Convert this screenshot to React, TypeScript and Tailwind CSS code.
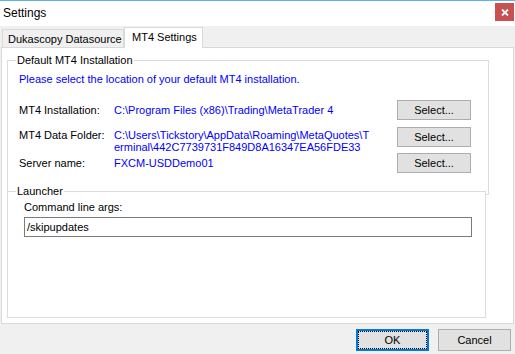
import React from "react";

const F = { fontFamily: '"Liberation Sans", Arial, sans-serif' };

function SelectBtn() {
  return (
    <button className="w-[74px] h-[20px] bg-[#e1e1e1] border border-[#adadad] text-[11px] leading-[13px] text-black flex items-center justify-center">
      Select...
    </button>
  );
}

export default function App() {
  return (
    <div
      className="w-[515px] h-[354px] bg-[#f0f0f0] flex flex-col overflow-hidden text-black"
      style={F}
    >
      {/* Title bar */}
      <div className="h-[26px] bg-white border-t border-[#5cb3ec] flex items-start justify-between">
        <div className="pl-[3px] pt-[4px] text-[12px] leading-[16px]">Settings</div>
        <div className="mt-[2px] mr-[1px] w-[19px] h-[18px] bg-[#c75050] flex items-center justify-center">
          <svg width="8" height="7" viewBox="0 0 8 7">
            <path d="M1 0.5 L7 6.5 M7 0.5 L1 6.5" stroke="white" strokeWidth="1.8" />
          </svg>
        </div>
      </div>

      {/* Tabs strip */}
      <div className="h-[21px] flex items-end pl-[2px]">
        <div className="w-[122px] h-[18px] border border-b-0 border-[#d9d9d9] bg-[#f0f0f0] text-[11px] leading-[13px] pl-[5px] pt-[3px]">
          Dukascopy Datasource
        </div>
        <div className="relative z-10 -mb-px w-[79px] h-[21px] border border-b-0 border-[#d9d9d9] bg-white text-[11px] leading-[13px] pl-[7px] pt-[3px]">
          MT4 Settings
        </div>
      </div>

      {/* Panel */}
      <div className="ml-[1px] w-[513px] h-[277px] border border-[#d9d9d9] bg-white flex flex-col text-[11px] leading-[13px]">
        {/* Group 1 */}
        <div className="relative ml-[5px] mt-[12px] w-[482px] h-[135px] border border-[#dcdcdc] flex flex-col">
          <span className="absolute left-[8px] top-[-7px] bg-white px-[1px]">Default MT4 Installation</span>
          <div className="ml-[11px] mt-[12px] text-[#0000ff]">
            Please select the location of your default MT4 installation.
          </div>
          <div className="mt-[14px] h-[20px] flex items-start">
            <div className="ml-[11px] w-[95px] mt-[4px]">MT4 Installation:</div>
            <div className="w-[283px] mt-[4px] text-[#0000ff] whitespace-nowrap">
              C:\Program Files (x86)\Trading\MetaTrader 4
            </div>
            <SelectBtn />
          </div>
          <div className="mt-[7px] h-[20px] flex items-start">
            <div className="ml-[11px] w-[95px] mt-[2px]">MT4 Data Folder:</div>
            <div className="w-[283px] mt-[2px] text-[#0000ff] whitespace-nowrap leading-[12px]">
              C:\Users\Tickstory\AppData\Roaming\MetaQuotes\T
              <br />
              erminal\442C7739731F849D8A16347EA56FDE33
            </div>
            <SelectBtn />
          </div>
          <div className="mt-[6px] h-[20px] flex items-start">
            <div className="ml-[11px] w-[95px] mt-[4px]">Server name:</div>
            <div className="w-[283px] mt-[4px] text-[#0000ff] whitespace-nowrap">FXCM-USDDemo01</div>
            <SelectBtn />
          </div>
        </div>

        {/* Launcher group */}
        <div className="relative ml-[5px] -mt-[4px] w-[479px] h-[127px] border border-[#dcdcdc] bg-white flex flex-col">
          <span className="absolute left-[8px] top-[-7px] bg-white px-[1px]">Launcher</span>
          <div className="ml-[16px] mt-[9px]">Command line args:</div>
          <div className="ml-[16px] mt-[3px] w-[448px] h-[20px] border border-[#7a7a7a] bg-white pl-[2px] flex items-center">
            /skipupdates
          </div>
        </div>
      </div>

      {/* Bottom buttons */}
      <div className="mt-[5px] flex justify-end pr-[4px] gap-[9px] text-[11px] leading-[13px]">
        <button className="w-[73px] h-[22px] bg-[#e1e1e1] border-2 border-[#0078d7] outline outline-1 outline-dotted outline-black outline-offset-[-3px] flex items-center justify-center">
          OK
        </button>
        <button className="w-[73px] h-[22px] bg-[#e1e1e1] border border-[#adadad] flex items-center justify-center">
          Cancel
        </button>
      </div>
    </div>
  );
}
